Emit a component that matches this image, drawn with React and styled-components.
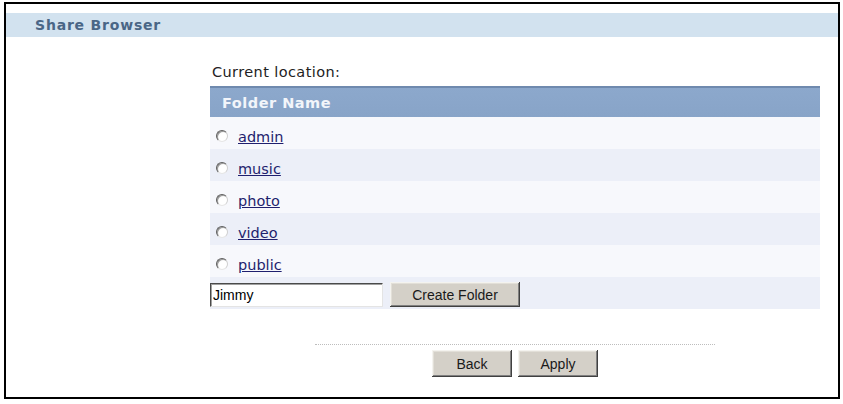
import React, { useState } from "react";
import styled, { createGlobalStyle } from "styled-components";

const GlobalStyle = createGlobalStyle`
  body {
    margin: 0;
    background: #fff;
    font-family: "DejaVu Sans", Verdana, sans-serif;
  }
`;

const Frame = styled.div`
  box-sizing: border-box;
  width: 836px;
  height: 397px;
  margin: 2px 0 0 4px;
  border: 2px solid #000;
  padding-top: 9px;
`;

const TitleBar = styled.div`
  height: 24px;
  display: flex;
  align-items: center;
  padding-left: 29px;
  background: #d2e2ef;
  color: #4a6686;
  font-size: 14px;
  font-weight: bold;
  letter-spacing: 0.8px;
`;

const Content = styled.div`
  width: 610px;
  margin-left: 204px;
  padding-top: 27px;
`;

const Location = styled.div`
  padding-left: 2px;
  font-size: 14.5px;
  line-height: 17px;
  letter-spacing: 0.4px;
  color: #222;
  margin-bottom: 5px;
`;

const HeadRow = styled.div`
  box-sizing: border-box;
  height: 31px;
  display: flex;
  align-items: center;
  padding-left: 12px;
  border-top: 2px solid #6f8aae;
  background: linear-gradient(#8ca8cc, #88a4c8);
  color: #f2f5fa;
  font-size: 14.5px;
  font-weight: bold;
  letter-spacing: 0.5px;
`;

const Row = styled.div`
  box-sizing: border-box;
  height: 32px;
  display: flex;
  align-items: flex-end;
  padding: 0 0 3px 6px;
  background: ${props => (props.shade ? "#eceff8" : "#f7f8fc")};
`;

const Radio = styled.span`
  box-sizing: border-box;
  width: 12px;
  height: 12px;
  margin: 0 10px 4px 0;
  border-radius: 50%;
  border: 1px solid;
  border-color: #5e5e5e #cfcfcf #e6e6e6 #5e5e5e;
  background: ${props =>
    props.checked
      ? "radial-gradient(circle, #222 0 2px, #fff 2.5px)"
      : "radial-gradient(circle at 65% 65%, #fff 45%, #e8e8e8)"};
  box-shadow: inset 1px 1px 0 #9a9a9a;
  cursor: pointer;
`;

const FolderLink = styled.a`
  font-size: 14.5px;
  line-height: 17px;
  color: #1f1f6e;
  text-decoration: underline;
  cursor: pointer;
`;

const FormRow = styled.div`
  box-sizing: border-box;
  height: 32px;
  display: flex;
  align-items: flex-end;
  gap: 7px;
  padding-bottom: 2px;
  background: #eceff8;
`;

const NameInput = styled.input`
  box-sizing: border-box;
  width: 173px;
  height: 24px;
  margin: 0;
  padding: 0 2px;
  border: 1px solid;
  border-color: #4a4a4a #e4e4e4 #e4e4e4 #4a4a4a;
  box-shadow: inset 1px 1px 0 #a0a0a0;
  background: #fff;
  font-family: "Liberation Sans", Arial, sans-serif;
  font-size: 14px;
  color: #000;
  outline: none;
`;

const Button = styled.button`
  box-sizing: border-box;
  width: ${props => props.w}px;
  height: ${props => props.h}px;
  margin: 0;
  padding: 0;
  border: none;
  background: #d4d0c8;
  box-shadow: inset -1px -1px 0 #404040, inset 1px 1px 0 #f4f3ef,
    inset -2px -2px 0 #808080, inset 2px 2px 0 #e2dfd8;
  font-family: "Liberation Sans", Arial, sans-serif;
  font-size: 14px;
  color: #1a1a1a;
  cursor: pointer;
`;

const Divider = styled.div`
  width: 400px;
  margin: 35px auto 0;
  border-top: 1px dotted #bdbdbd;
`;

const Actions = styled.div`
  display: flex;
  justify-content: center;
  gap: 6px;
  margin-top: 5px;
`;

const folders = ["admin", "music", "photo", "video", "public"];

export default function App() {
  const [selected, setSelected] = useState(null);
  const [name, setName] = useState("Jimmy");

  return (
    <>
      <GlobalStyle />
      <Frame>
        <TitleBar>Share Browser</TitleBar>
        <Content>
          <Location>Current location:</Location>
          <HeadRow>Folder Name</HeadRow>
          {folders.map((folder, index) => (
            <Row key={folder} shade={index % 2 === 1}>
              <Radio
                checked={selected === folder}
                onClick={() => setSelected(folder)}
              />
              <FolderLink>{folder}</FolderLink>
            </Row>
          ))}
          <FormRow>
            <NameInput value={name} onChange={e => setName(e.target.value)} />
            <Button w={130} h={25}>
              Create Folder
            </Button>
          </FormRow>
          <Divider />
          <Actions>
            <Button w={80} h={27}>
              Back
            </Button>
            <Button w={80} h={27}>
              Apply
            </Button>
          </Actions>
        </Content>
      </Frame>
    </>
  );
}
